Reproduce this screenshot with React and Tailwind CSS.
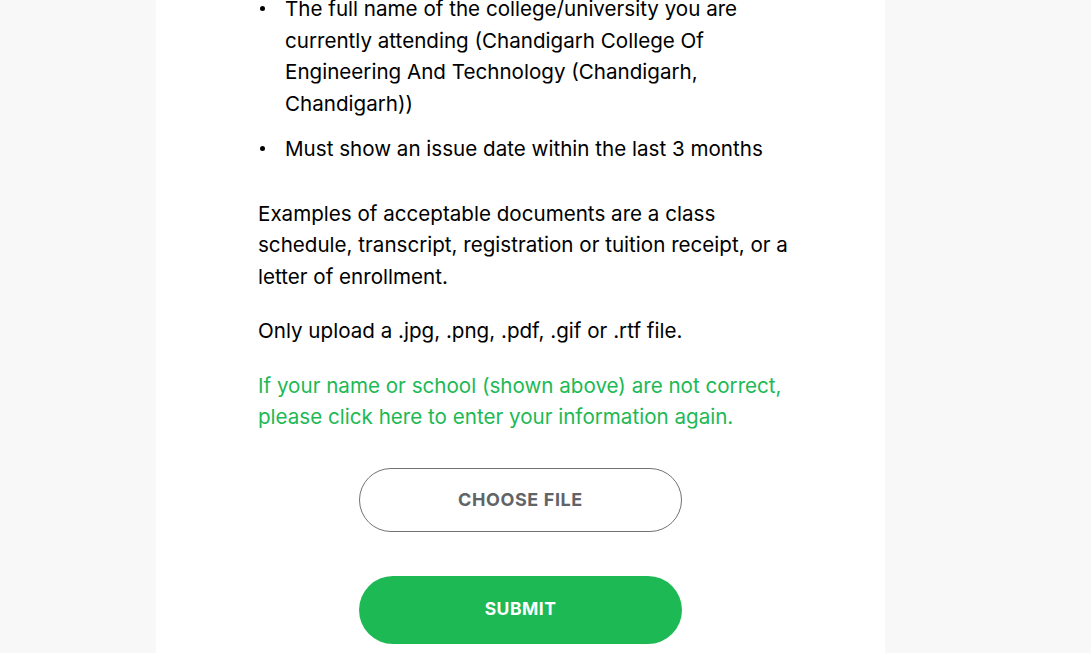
const Bullet = ({ children, className = "" }) => (
  <li className={`flex ${className}`}>
    <span className="w-[27px] h-[31.5px] shrink-0 flex items-center pl-[2px]">
      <span className="w-[5px] h-[5px] rounded-full bg-black" />
    </span>
    <span>{children}</span>
  </li>
);

export default function App() {
  return (
    <div
      className="w-full h-[653px] overflow-hidden bg-[#f8f8f8]"
      style={{ fontFamily: "Inter, 'Liberation Sans', sans-serif" }}
    >
      <div className="ml-[156px] w-[729px] h-full bg-white flex flex-col">
        <div className="pl-[102px] pr-[88px] -mt-[7px] text-[20.6px] leading-[31.5px] text-black">
          <ul>
            <Bullet className="mb-[14px]">
              The full name of the college/university you are currently attending (Chandigarh College Of
              Engineering And Technology (Chandigarh, Chandigarh))
            </Bullet>
            <Bullet>Must show an issue date within the last 3 months</Bullet>
          </ul>

          <p className="mt-[33px]">
            Examples of acceptable documents are a class schedule, transcript, registration or tuition
            receipt, or a letter of enrollment.
          </p>
          <p className="mt-[23px]">Only upload a .jpg, .png, .pdf, .gif or .rtf file.</p>
          <p className="mt-[23px] text-[#1db954]">
            If your name or school (shown above) are not correct, please click here to enter your
            information again.
          </p>
        </div>

        <div className="flex flex-col items-center mt-[35px] gap-[44px]">
          <button className="w-[323px] h-[64px] rounded-full border border-[#727272] bg-white text-[#616467] text-[18px] font-bold tracking-[0.6px]">
            CHOOSE FILE
          </button>
          <button className="w-[323px] h-[68px] rounded-full bg-[#1db954] text-white text-[17.5px] font-bold tracking-[0.5px]">
            SUBMIT
          </button>
        </div>
      </div>
    </div>
  );
}
